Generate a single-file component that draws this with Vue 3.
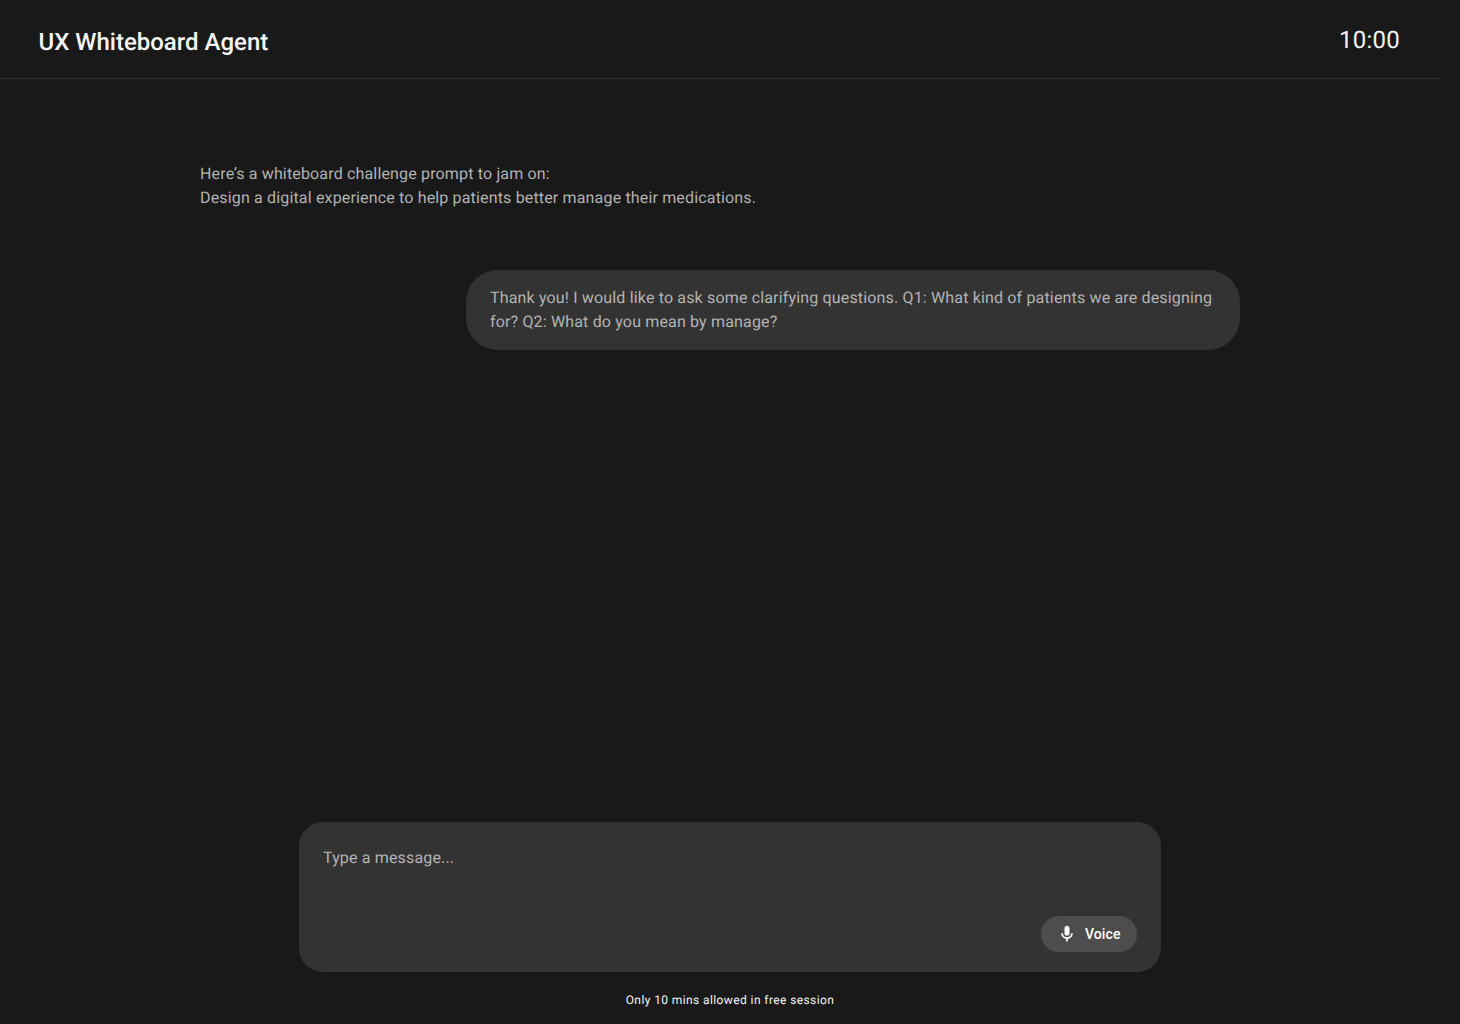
<script setup>
const prompt = ['Here’s a whiteboard challenge prompt to jam on:', 'Design a digital experience to help patients better manage their medications.']
const reply = 'Thank you! I would like to ask some clarifying questions. Q1: What kind of patients we are designing for? Q2: What do you mean by manage?'
</script>

<template>
  <div class="page">
    <header class="header">
      <h1 class="title">UX Whiteboard Agent</h1>
      <time class="timer">10:00</time>
    </header>
    <main class="chat">
      <div class="agent">
        <p v-for="line in prompt" :key="line">{{ line }}</p>
      </div>
      <div class="user">{{ reply }}</div>
    </main>
    <footer class="footer">
      <div class="composer">
        <div class="placeholder">Type a message...</div>
        <button class="voice" type="button">
          <svg class="mic" viewBox="0 0 24 24" aria-hidden="true">
            <path fill="currentColor" d="M12 14c1.66 0 3-1.34 3-3V5c0-1.66-1.34-3-3-3S9 3.34 9 5v6c0 1.66 1.34 3 3 3zm5-3c0 2.76-2.24 5-5 5s-5-2.24-5-5H5c0 3.53 2.61 6.43 6 6.92V21h2v-3.08c3.39-.49 6-3.39 6-6.92h-2z" />
          </svg>
          <span>Voice</span>
        </button>
      </div>
      <p class="note">Only 10 mins allowed in free session</p>
    </footer>
  </div>
</template>

<style>
body { background: #191919; }
</style>

<style scoped>
.page {
  display: flex;
  flex-direction: column;
  width: 1460px;
  height: 1024px;
  overflow: hidden;
  background: #191919;
  color: #b3b3b3;
  font-family: Roboto, sans-serif;
  font-size: 16px;
  line-height: 24px;
  letter-spacing: 0.16px;
  text-rendering: geometricPrecision;
}
p, h1 { margin: 0; }
.header {
  display: flex;
  justify-content: space-between;
  box-sizing: border-box;
  width: 1440px;
  height: 79px;
  padding: 24px 40px 0 38.5px;
  border-bottom: 1px solid #333;
  color: #f5f5f5;
}
.title {
  padding-top: 2px;
  font-size: 24px;
  font-weight: 500;
  line-height: 32px;
  letter-spacing: 0;
}
.timer {
  font-size: 24px;
  line-height: 32px;
  letter-spacing: 0.24px;
}
.chat {
  display: flex;
  flex: 1;
  flex-direction: column;
  gap: 60px;
  padding: 83px 220px 0 200px;
}
.user {
  align-self: flex-end;
  box-sizing: border-box;
  width: 774px;
  padding: 16px 24px;
  border-radius: 32px;
  background: #333;
}
.footer {
  display: flex;
  flex-direction: column;
  align-items: center;
  gap: 20px;
  padding-bottom: 16px;
}
.composer {
  display: flex;
  flex-direction: column;
  justify-content: space-between;
  box-sizing: border-box;
  width: 862px;
  height: 150px;
  padding: 24px 24px 20px;
  border-radius: 24px;
  background: #333;
}
.voice {
  display: flex;
  align-self: flex-end;
  align-items: center;
  gap: 8px;
  box-sizing: border-box;
  width: 96px;
  height: 36px;
  padding: 0 16px;
  border: 0;
  border-radius: 18px;
  background: #4d4d4d;
  color: #fff;
  font: 500 14px/20px Roboto, sans-serif;
  letter-spacing: 0.1px;
}
.mic { width: 20px; height: 20px; }
.note {
  color: #f5f5f5;
  font-size: 12px;
  line-height: 16px;
  letter-spacing: 0.4px;
}
</style>
